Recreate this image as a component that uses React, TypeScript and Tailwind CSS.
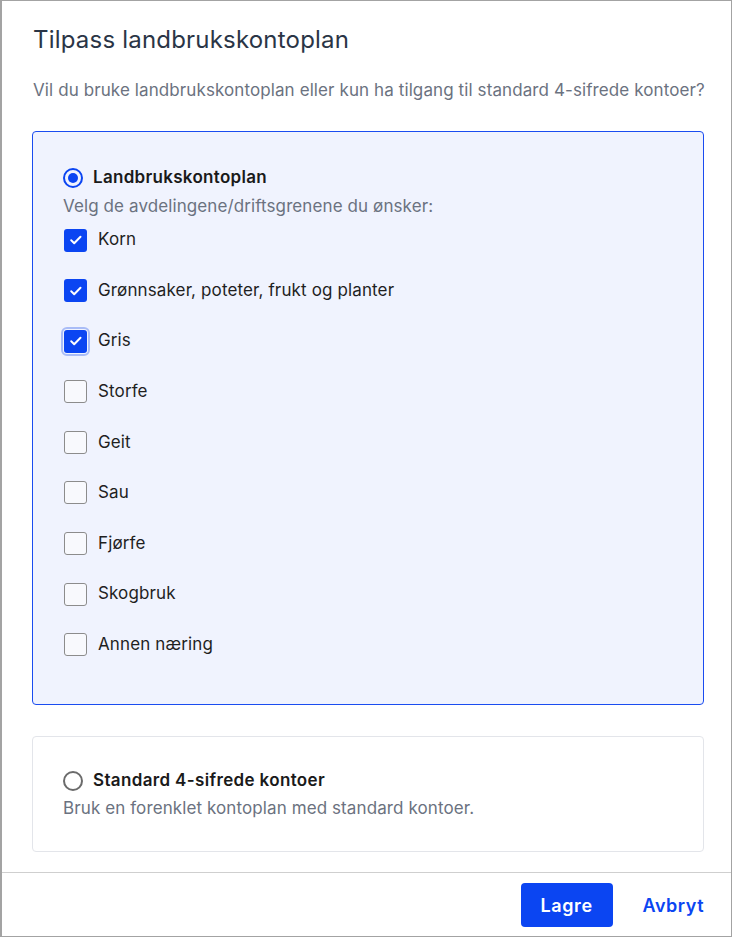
import React from "react";

const items: { label: string; checked: boolean; focus?: boolean }[] = [
  { label: "Korn", checked: true },
  { label: "Grønnsaker, poteter, frukt og planter", checked: true },
  { label: "Gris", checked: true, focus: true },
  { label: "Storfe", checked: false },
  { label: "Geit", checked: false },
  { label: "Sau", checked: false },
  { label: "Fjørfe", checked: false },
  { label: "Skogbruk", checked: false },
  { label: "Annen næring", checked: false },
];

function Check() {
  return (
    <svg width="16" height="16" viewBox="0 0 16 16" fill="none">
      <path d="M3.2 8.3l3 2.9 6.3-6.4" stroke="white" strokeWidth="2" strokeLinecap="round" strokeLinejoin="round" />
    </svg>
  );
}

function CheckBox({ checked, focus }: { checked: boolean; focus?: boolean }) {
  if (checked) {
    return (
      <div
        className={
          "w-[23px] h-[23px] rounded-[3px] bg-[#0b45f2] flex items-center justify-center shrink-0 " +
          (focus ? "outline outline-2 outline-offset-[1px] outline-[#a9bcf7]" : "")
        }
      >
        <Check />
      </div>
    );
  }
  return <div className="w-[23px] h-[23px] rounded-[3px] bg-[#f8f9fd] border border-[#8c8c8c] shrink-0" />;
}

export default function App() {
  return (
    <div
      className="w-[732px] h-[937px] bg-white border border-[#a3a3a3] border-l-2 flex flex-col text-[#1f2937] overflow-hidden"
      style={{ fontFamily: "Inter, 'Noto Sans', sans-serif" }}
    >
      <div className="flex-1 pl-[30px] pr-[27px] pt-[24px]">
        <h1 className="ml-px text-[24px] leading-[30px] text-[#2a3546] tracking-[0.2px] whitespace-nowrap">Tilpass landbrukskontoplan</h1>
        <p className="ml-px mt-[23px] text-[17px] leading-[24px] text-[#6b7280] tracking-[0.1px] whitespace-nowrap">
          Vil du bruke landbrukskontoplan eller kun ha tilgang til standard 4-sifrede kontoer?
        </p>

        <div className="mt-[29px] w-[672px] rounded-[4px] border border-[#1a4cf0] bg-[#f0f3fe] pl-[30px] pt-[34px] pb-[47px]">
          <div className="flex items-center h-[24px]">
            <div className="w-[20px] h-[20px] rounded-full border-2 border-[#0b45f2] flex items-center justify-center">
              <div className="w-[10px] h-[10px] rounded-full bg-[#0b45f2]" />
            </div>
            <span className="ml-[10px] text-[17px] font-semibold text-[#1a1a1a] tracking-[0.3px]">Landbrukskontoplan</span>
          </div>
          <p className="mt-[4px] text-[17px] leading-[24px] text-[#6b7280] tracking-[0.1px]">Velg de avdelingene/driftsgrenene du ønsker:</p>
          <div className="mt-[10px] flex flex-col gap-[26.6px]">
            {items.map((it) => (
              <div key={it.label} className="flex items-center h-[24px] pl-px">
                <CheckBox checked={it.checked} focus={it.focus} />
                <span className="ml-[11px] text-[17px] text-[#1f1f1f] tracking-[0.13px]">{it.label}</span>
              </div>
            ))}
          </div>
        </div>

        <div className="mt-[31px] w-[672px] rounded-[4px] border border-[#e3e5ea] bg-white pl-[30px] pt-[32px] pb-[31px]">
          <div className="flex items-center h-[24px]">
            <div className="w-[20px] h-[20px] rounded-full border-2 border-[#6b6b6b]" />
            <span className="ml-[10px] text-[17px] font-semibold text-[#1a1a1a] tracking-[0.35px]">Standard 4-sifrede kontoer</span>
          </div>
          <p className="mt-[3px] text-[17px] leading-[24px] text-[#6b7280] tracking-[0.1px]">Bruk en forenklet kontoplan med standard kontoer.</p>
        </div>
      </div>

      <div className="border-t border-[#cfcfcf] h-[64px] shrink-0 flex items-start justify-end pt-[10px] pr-[27px]">
        <button className="w-[92px] h-[44px] rounded-[4px] bg-[#0b45f2] text-white text-[18px] font-semibold tracking-[0.6px]">Lagre</button>
        <button className="ml-[30px] h-[44px] text-[#0b45f2] text-[18px] font-semibold tracking-[0.5px]">Avbryt</button>
      </div>
    </div>
  );
}
